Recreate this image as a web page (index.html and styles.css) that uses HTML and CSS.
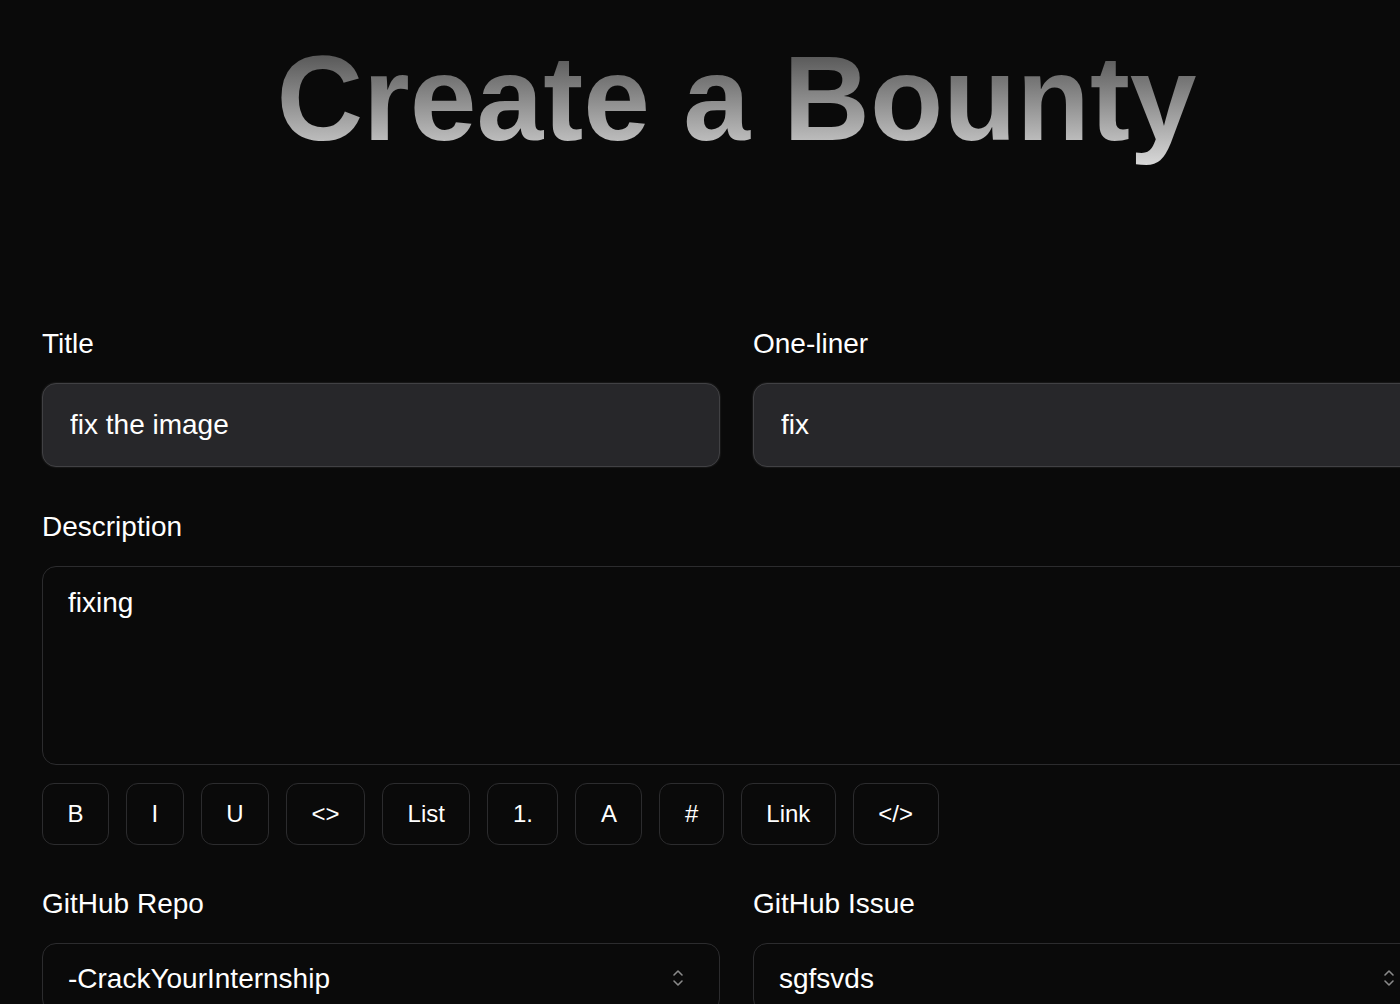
FILE: index.html
```html
<!DOCTYPE html>
<html lang="en">
<head>
<meta charset="utf-8">
<title>Create a Bounty</title>
<link rel="stylesheet" href="styles.css">
</head>
<body>
<main class="page">
  <h1 class="hero"><span class="hero-text">Create a Bounty</span></h1>

  <form class="form">
    <div class="row">
      <div class="field">
        <label class="label" for="title">Title</label>
        <input class="input" id="title" type="text" value="fix the image">
      </div>
      <div class="field">
        <label class="label" for="oneliner">One-liner</label>
        <input class="input" id="oneliner" type="text" value="fix">
      </div>
    </div>

    <div class="field">
      <label class="label" for="desc">Description</label>
      <textarea class="textarea" id="desc">fixing</textarea>
      <div class="toolbar">
        <button type="button" class="tool">B</button>
        <button type="button" class="tool">I</button>
        <button type="button" class="tool">U</button>
        <button type="button" class="tool">&lt;&gt;</button>
        <button type="button" class="tool">List</button>
        <button type="button" class="tool">1.</button>
        <button type="button" class="tool">A</button>
        <button type="button" class="tool">#</button>
        <button type="button" class="tool">Link</button>
        <button type="button" class="tool">&lt;/&gt;</button>
      </div>
    </div>

    <div class="row row-last">
      <div class="field">
        <label class="label" for="repo">GitHub Repo</label>
        <div class="select-wrap">
          <select class="select" id="repo"><option>-CrackYourInternship</option></select>
          <svg class="chev" width="12" height="22" viewBox="0 0 12 22" aria-hidden="true"><path d="M2 8 L6 4 L10 8 M2 14 L6 18 L10 14" fill="none" stroke="#8a8a8a" stroke-width="1.6" stroke-linecap="round" stroke-linejoin="round"/></svg>
        </div>
      </div>
      <div class="field">
        <label class="label" for="issue">GitHub Issue</label>
        <div class="select-wrap">
          <select class="select" id="issue"><option>sgfsvds</option></select>
          <svg class="chev" width="12" height="22" viewBox="0 0 12 22" aria-hidden="true"><path d="M2 8 L6 4 L10 8 M2 14 L6 18 L10 14" fill="none" stroke="#8a8a8a" stroke-width="1.6" stroke-linecap="round" stroke-linejoin="round"/></svg>
        </div>
      </div>
    </div>
  </form>
</main>
</body>
</html>
```

FILE: styles.css
```css
html, body {
  margin: 0;
  padding: 0;
  background: #0a0a0a;
  color: #ffffff;
  font-family: "Liberation Sans", Arial, Helvetica, sans-serif;
  overflow: hidden;
}

.page {
  width: 1389px;
  margin-left: 42px;
  padding-top: 26px;
}

.hero {
  margin: 0;
  text-align: center;
  font-size: 120px;
  line-height: 144px;
  font-weight: 700;
  height: 144px;
}

.hero-text {
  display: inline-block;
  background: linear-gradient(to bottom, #373737 0%, #dedede 100%);
  -webkit-background-clip: text;
  background-clip: text;
  color: transparent;
  -webkit-text-fill-color: transparent;
}

.form {
  margin-top: 158px;
  display: flex;
  flex-direction: column;
  gap: 44px;
}

.row {
  display: grid;
  grid-template-columns: 678px 678px;
  column-gap: 33px;
}

.field {
  display: flex;
  flex-direction: column;
}

.label {
  font-size: 28px;
  line-height: 32px;
  color: #ffffff;
  margin-bottom: 23px;
}

.input {
  box-sizing: border-box;
  height: 84px;
  width: 100%;
  margin: 0;
  padding: 0 27px;
  background: #27272a;
  border: 1px solid #414144;
  border-radius: 14px;
  box-shadow: 0 0 0 1px rgba(255, 255, 255, 0.03), 0 0 3px rgba(255, 255, 255, 0.07);
  color: #ffffff;
  font-family: "Liberation Sans", Arial, Helvetica, sans-serif;
  font-size: 28px;
  outline: none;
}

.textarea {
  box-sizing: border-box;
  height: 199px;
  width: 100%;
  margin: 0;
  padding: 20px 25px;
  background: #0a0a0a;
  border: 1px solid #2c2c2e;
  border-radius: 14px;
  color: #ffffff;
  font-family: "Liberation Sans", Arial, Helvetica, sans-serif;
  font-size: 28px;
  line-height: 32px;
  resize: none;
  outline: none;
}

.toolbar {
  display: flex;
  gap: 17px;
  margin-top: 18px;
}

.tool {
  box-sizing: border-box;
  height: 62px;
  padding: 0 24.5px;
  background: transparent;
  border: 1px solid #2c2c2e;
  border-radius: 12px;
  color: #ffffff;
  font-family: "Liberation Sans", Arial, Helvetica, sans-serif;
  font-size: 24px;
  cursor: pointer;
}

.row-last {
  margin-top: -1px;
}

.select-wrap {
  position: relative;
}

.select {
  box-sizing: border-box;
  width: 100%;
  height: 70px;
  margin: 0;
  padding: 0 25px;
  -webkit-appearance: none;
  appearance: none;
  background: #0a0a0a;
  border: 1px solid #2c2c2e;
  border-radius: 14px;
  color: #ffffff;
  font-family: "Liberation Sans", Arial, Helvetica, sans-serif;
  font-size: 28px;
  outline: none;
}

.chev {
  position: absolute;
  right: 36px;
  top: 24px;
}
```
